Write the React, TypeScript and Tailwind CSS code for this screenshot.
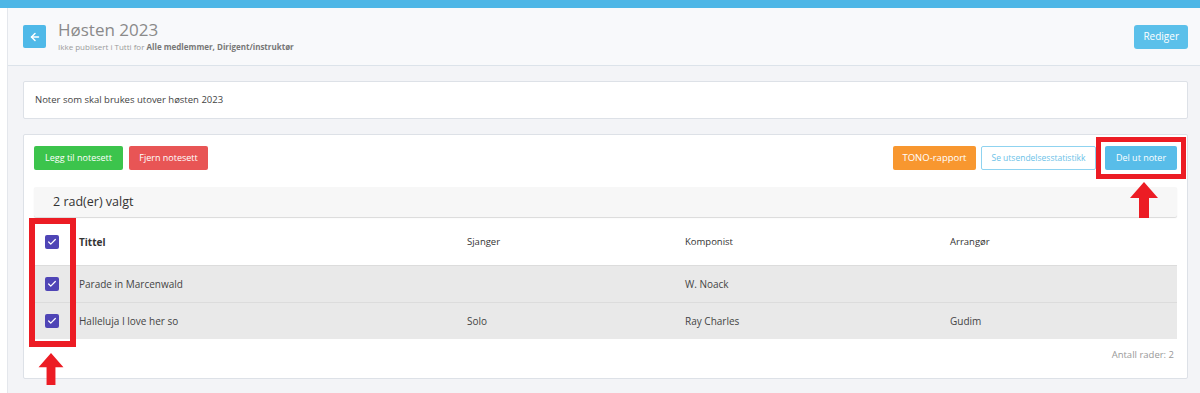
import { ArrowLeft, Check } from "lucide-react";

type Row = { title: string; genre: string; composer: string; arranger: string };

const rows: Row[] = [
  { title: "Parade in Marcenwald", genre: "", composer: "W. Noack", arranger: "" },
  { title: "Halleluja I love her so", genre: "Solo", composer: "Ray Charles", arranger: "Gudim" },
];

function Checkbox() {
  return (
    <span className="flex h-[14px] w-[14px] items-center justify-center rounded-[2px] bg-[#4f45b6]">
      <Check size={10} strokeWidth={3} className="text-white" />
    </span>
  );
}

function RedArrow({ className }: { className: string }) {
  return (
    <svg viewBox="0 0 28 36" className={className}>
      <polygon points="14,0 28,16 19,16 19,36 9,36 9,16 0,16" fill="#ec1c24" />
    </svg>
  );
}

export default function App() {
  return (
    <div className="relative h-[393px] w-[1200px] overflow-hidden bg-white font-['Open_Sans',sans-serif] text-[#555]">
      <div className="h-2 bg-[#4db6e6]" />
      <div className="flex h-[385px]">
        <div className="w-2 border-r border-[#e4e7ec] bg-white" />
        <div className="flex flex-1 flex-col bg-[#f3f4f7]">
          {/* header */}
          <div className="flex h-[58px] items-center justify-between border-b border-[#dce3ea] bg-[#f8f9fb] pl-[15px] pr-[12px]">
            <div className="flex items-center gap-3">
              <button className="flex h-[23px] w-[23px] items-center justify-center rounded-[2px] bg-[#4fb9e8]">
                <ArrowLeft size={12} strokeWidth={3} className="text-white" />
              </button>
              <div className="-mt-1">
                <div className="text-[17px] leading-[24px] text-[#8a8a8a]">Høsten 2023</div>
                <div className="text-[8px] leading-[10px] text-[#9a9a9a]">
                  Ikke publisert i Tutti for <b className="text-[#777]">Alle medlemmer, Dirigent/instruktør</b>
                </div>
              </div>
            </div>
            <button className="h-[24px] rounded-[3px] bg-[#5bc0ea] px-[9px] text-[10px] text-white">Rediger</button>
          </div>

          <div className="flex flex-col gap-[15px] pl-[15px] pr-[12px] pt-[15px]">
            <div className="flex h-[38px] items-center rounded-[2px] border border-[#dde1e7] bg-white px-[11px] text-[9.5px] text-[#444]">
              Noter som skal brukes utover høsten 2023
            </div>

            <div className="flex h-[245px] flex-col rounded-[2px] border border-[#dde1e7] bg-white px-[10px] pt-[11px]">
              <div className="flex h-[24px] items-center justify-between">
                <div className="flex gap-[6px]">
                  <button className="h-[24px] w-[89px] rounded-[2px] bg-[#3cc44c] text-[9px] text-white">Legg til notesett</button>
                  <button className="h-[24px] w-[79px] rounded-[2px] bg-[#e85555] text-[9px] text-white">Fjern notesett</button>
                </div>
                <div className="flex gap-[5px]">
                  <button className="h-[24px] w-[83px] rounded-[2px] bg-[#f8972f] text-[9.5px] text-white">TONO-rapport</button>
                  <button className="h-[24px] w-[115px] rounded-[2px] border border-[#8fd3f0] bg-white text-[8.5px] text-[#6cc2e8]">Se utsendelsesstatistikk</button>
                  <button className="ml-[4px] h-[24px] w-[72px] rounded-[2px] bg-[#58bde9] text-[9px] text-white">Del ut noter</button>
                </div>
              </div>

              <div className="mt-[17px] flex h-[30px] items-center rounded-[2px] bg-[#f7f7f7] pl-[19px] text-[12.5px] text-[#333] shadow-[0_1px_1px_rgba(0,0,0,0.15)]">
                2 rad(er) valgt
              </div>

              <div className="mt-[2px] text-[10px] text-[#444]">
                <div className="grid h-[46px] grid-cols-[45px_388px_218px_265px_1fr] items-center font-bold text-[#333]">
                  <div className="pl-[11px]"><Checkbox /></div>
                  <div>Tittel</div>
                  <div className="text-[9.5px] font-normal">Sjanger</div>
                  <div className="text-[9.5px] font-normal">Komponist</div>
                  <div className="text-[9.5px] font-normal">Arrangør</div>
                </div>
                {rows.map((row) => (
                  <div key={row.title} className="grid h-[37px] grid-cols-[45px_388px_218px_265px_1fr] items-center border-t border-[#dcdcdc] bg-[#e9e9e9]">
                    <div className="pl-[11px]"><Checkbox /></div>
                    <div>{row.title}</div>
                    <div>{row.genre}</div>
                    <div>{row.composer}</div>
                    <div>{row.arranger}</div>
                  </div>
                ))}
                <div className="mt-[9px] pr-[3px] text-right text-[9.5px] text-[#999]">Antall rader: 2</div>
              </div>
            </div>
          </div>
        </div>
      </div>

      {/* annotations */}
      <div className="absolute left-[1096px] top-[137px] h-[42px] w-[90px] border-[5px] border-[#ec1c24]" />
      <RedArrow className="absolute left-[1130px] top-[181px] h-[38px] w-[28px]" />
      <div className="absolute left-[29px] top-[218px] h-[129px] w-[47px] border-[6px] border-[#ec1c24]" />
      <RedArrow className="absolute left-[38px] top-[353px] h-[32px] w-[26px]" />
    </div>
  );
}
